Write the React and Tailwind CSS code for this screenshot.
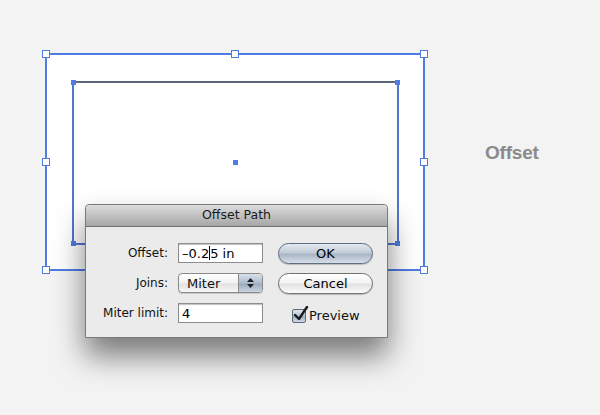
function Handle({ className }) {
  return <span className={`absolute w-[8px] h-[8px] bg-white border border-[#4f7be3] ${className}`} />
}

function Anchor({ className }) {
  return <span className={`absolute w-[5px] h-[5px] bg-[#4f7be3] ${className}`} />
}

function Field({ children }) {
  return (
    <div className="w-[85px] h-[20px] bg-white border border-[#8d8d8d] shadow-[inset_0_1px_1px_rgba(0,0,0,0.25)] flex items-center px-[3px] text-[13px] text-black leading-none">
      {children}
    </div>
  )
}

function AquaButton({ label, primary }) {
  return (
    <div
      className={`w-[95px] h-[21px] rounded-full border flex items-center justify-center text-[13px] text-black leading-none shadow-[0_1px_1px_rgba(0,0,0,0.2)] ${
        primary
          ? 'border-[#5f6d80] bg-[linear-gradient(#e3e9f1,#c2ccd8_45%,#a9b6c7_55%,#d7dee8)]'
          : 'border-[#707070] bg-[linear-gradient(#ffffff,#f3f3f3_45%,#e2e2e2_55%,#fbfbfb)]'
      }`}
    >
      {label}
    </div>
  )
}

export default function App() {
  return (
    <div className="relative w-[600px] h-[415px] overflow-hidden bg-[#f3f3f3] font-['DejaVu_Sans',sans-serif]">
      {/* offset path preview */}
      <div className="absolute left-[45px] top-[53px] w-[380px] h-[218px] border-2 border-[#4f7be3] bg-white" />
      <div className="absolute left-[72px] top-[81px] w-[327px] h-[164px] border-2 border-[#5375d2] border-t-[#5f6678]" />
      <Anchor className="left-[71px] top-[80px]" />
      <Anchor className="left-[395px] top-[80px]" />
      <Anchor className="left-[71px] top-[241px]" />
      <Anchor className="left-[395px] top-[241px]" />
      <Anchor className="left-[233px] top-[160px]" />
      <Handle className="left-[42px] top-[50px]" />
      <Handle className="left-[231px] top-[50px]" />
      <Handle className="left-[420px] top-[50px]" />
      <Handle className="left-[42px] top-[158px]" />
      <Handle className="left-[420px] top-[158px]" />
      <Handle className="left-[42px] top-[266px]" />
      <Handle className="left-[420px] top-[266px]" />

      <div className="absolute left-[485px] top-[139px] text-[19px] font-bold text-[#8a8a8a] font-['Liberation_Sans',sans-serif] tracking-[-0.2px]">
        Offset
      </div>

      {/* dialog */}
      <div className="absolute left-[85px] top-[204px] w-[303px] h-[134px] flex flex-col border border-[#7a7a7a] bg-[#ebebeb] shadow-[0_18px_30px_rgba(0,0,0,0.5)] rounded-t-[4px]">
        <div className="h-[22px] shrink-0 flex items-center justify-center text-[12.5px] text-[#1a1a1a] border-b border-[#6f6f6f] rounded-t-[4px] bg-[linear-gradient(#dcdcdc,#a6a6a6)]">
          Offset Path
        </div>
        <div className="flex flex-col gap-[10px] pt-[16px] text-[12px] text-[#111]">
          <div className="flex items-center h-[20px]">
            <span className="w-[82px] text-right">Offset:</span>
            <div className="ml-[10px]">
              <Field>
                –0.2<span className="inline-block w-px h-[14px] bg-black" />5 in
              </Field>
            </div>
            <div className="ml-[15px]">
              <AquaButton label="OK" primary />
            </div>
          </div>
          <div className="flex items-center h-[20px]">
            <span className="w-[82px] text-right">Joins:</span>
            <div className="ml-[10px] w-[85px] h-[20px] rounded-[4px] border border-[#8a8a8a] flex overflow-hidden bg-[linear-gradient(#ffffff,#f1f1f1_50%,#e1e1e1_55%,#f7f7f7)] shadow-[0_1px_1px_rgba(0,0,0,0.15)]">
              <span className="flex-1 flex items-center pl-[8px] text-[13px] leading-none">Miter</span>
              <span className="w-[24px] border-l border-[#8a8a8a] flex flex-col items-center justify-center gap-[2px] bg-[linear-gradient(#d8e0ea,#aebccc_50%,#9aabbd_55%,#c9d3df)]">
                <svg width="7" height="4" viewBox="0 0 7 4"><path d="M3.5 0 L7 4 L0 4 Z" fill="#222" /></svg>
                <svg width="7" height="4" viewBox="0 0 7 4"><path d="M0 0 L7 0 L3.5 4 Z" fill="#222" /></svg>
              </span>
            </div>
            <div className="ml-[15px]">
              <AquaButton label="Cancel" />
            </div>
          </div>
          <div className="flex items-center h-[20px]">
            <span className="w-[82px] text-right">Miter limit:</span>
            <div className="ml-[10px]">
              <Field>4</Field>
            </div>
            <div className="ml-[29px] mt-[6px] flex items-center gap-[3px] text-[13px]">
              <span className="relative w-[14px] h-[14px] rounded-[2px] border border-[#5c6a7c] bg-[linear-gradient(#e0e7ef,#b4c1d0_50%,#9eafc2_55%,#d0d9e3)]">
                <svg className="absolute -left-[1px] -top-[4px]" width="17" height="17" viewBox="0 0 17 17">
                  <path d="M3 9 L7 13 L15 1" fill="none" stroke="#1b1b1b" strokeWidth="2.4" strokeLinecap="round" strokeLinejoin="round" />
                </svg>
              </span>
              <span>Preview</span>
            </div>
          </div>
        </div>
      </div>
    </div>
  )
}
